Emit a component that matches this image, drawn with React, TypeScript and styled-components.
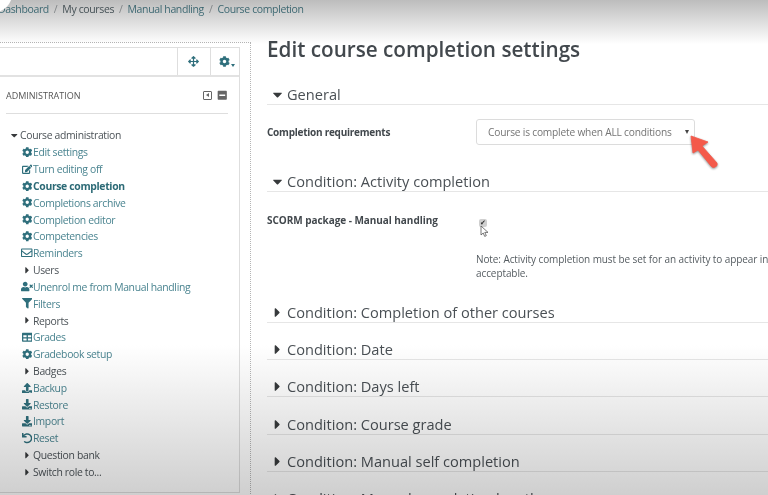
import styled, { createGlobalStyle } from "styled-components";
import {
  FaArrowsAlt,
  FaCaretDown,
  FaCaretRight,
  FaCog,
  FaDownload,
  FaEdit,
  FaFilter,
  FaMinusSquare,
  FaRegEnvelope,
  FaTable,
  FaUndo,
  FaUpload,
  FaUserTimes,
} from "react-icons/fa";
import type { ComponentType } from "react";

const GlobalStyle = createGlobalStyle`
  html, body {
    margin: 0;
    padding: 0;
    background: #fff;
  }
  body {
    font-family: "Open Sans", "Liberation Sans", sans-serif;
    color: #373a3c;
  }
`;

const Screen = styled.div`
  position: relative;
  width: 768px;
  height: 495px;
  overflow: hidden;
  background: #fff;
`;
const Page = styled.div`
  width: 768px;
  height: 495px;
  overflow: hidden;
  filter: blur(0.35px);
`;
const TopShade = styled.div`
  position: absolute;
  top: 0;
  left: 0;
  right: 0;
  height: 44px;
  mix-blend-mode: multiply;
  background: linear-gradient(#bdbdbd, #fff);
`;
const BottomShade = styled.div`
  position: absolute;
  bottom: 0;
  left: 0;
  right: 0;
  height: 150px;
  mix-blend-mode: multiply;
  background: linear-gradient(#fff, #cfcfcf);
`;
const Corner = styled.div`
  position: absolute;
  top: -24px;
  left: -24px;
  width: 36px;
  height: 36px;
  border-radius: 50%;
  background: #fff;
`;
const Breadcrumb = styled.nav`
  height: 17px;
  display: flex;
  align-items: center;
  font-size: 10.5px;
  letter-spacing: -0.37px;
  white-space: nowrap;
  margin-left: -2px;
`;
const Crumb = styled.span<{ $link?: boolean }>`
  color: ${(props) => (props.$link ? "#4f8490" : "#56656b")};
`;
const CrumbSep = styled.span`
  color: #a3a8ab;
  margin: 0 5px;
`;
const Columns = styled.div`
  display: flex;
  margin-top: 25px;
`;
const Sidebar = styled.aside`
  width: 250.5px;
  height: 460px;
  flex-shrink: 0;
  box-sizing: border-box;
  border-top: 1.5px dotted #b5b5b5;
  border-right: 1.5px dotted #b5b5b5;
  padding: 4px 10px 0 0;
`;
const Block = styled.section`
  height: 444px;
  border: 1px solid #dedede;
  border-left: none;
  display: flex;
  flex-direction: column;
`;
const BlockTools = styled.div`
  height: 27px;
  display: flex;
  justify-content: flex-end;
  border-bottom: 2px solid #e2e2e2;
`;
const ToolCell = styled.div<{ $w: number }>`
  width: ${(props) => props.$w}px;
  display: flex;
  align-items: center;
  justify-content: center;
  border-left: 1px solid #dedede;
  color: #2f6f7c;
  font-size: 11px;
  position: relative;
`;
const ToolCaret = styled.span`
  position: absolute;
  right: 4px;
  bottom: 8px;
  width: 0;
  height: 0;
  border-left: 2.5px solid transparent;
  border-right: 2.5px solid transparent;
  border-top: 3px solid #2f6f7c;
`;
const BlockHead = styled.header`
  margin: 0 11px 0 6px;
  height: 36px;
  display: flex;
  align-items: center;
  justify-content: space-between;
  border-bottom: 1px solid #dedede;
`;
const BlockTitle = styled.h2`
  margin: 0;
  font-size: 9px;
  font-weight: 400;
  color: #555;
`;
const HeadIcons = styled.div`
  display: flex;
  align-items: center;
  gap: 5px;
  color: #666;
  font-size: 10.5px;
`;
const DockIcon = styled.span`
  display: block;
  width: 9px;
  height: 9px;
  box-sizing: border-box;
  border: 1px solid #666;
  border-radius: 1px;
  position: relative;
  &::after {
    content: "";
    position: absolute;
    top: 1.5px;
    left: 1.5px;
    border-top: 2px solid transparent;
    border-bottom: 2px solid transparent;
    border-right: 3px solid #666;
  }
`;
const Tree = styled.ul`
  list-style: none;
  margin: 0;
  padding: 13px 0 0 8px;
`;
const Row = styled.li<{ $depth: number }>`
  height: 16.83px;
  display: flex;
  align-items: center;
  padding-left: ${(props) => props.$depth * 13}px;
  font-size: 10.4px;
  letter-spacing: -0.33px;
  white-space: nowrap;
`;
const IconSlot = styled.span<{ $size?: number }>`
  width: 12px;
  display: flex;
  align-items: center;
  justify-content: center;
  flex-shrink: 0;
  color: #2f6f7c;
  font-size: ${(props) => props.$size ?? 10.5}px;
`;
const CaretSlot = styled(IconSlot)`
  color: #373a3c;
  font-size: 10.5px;
`;
const RowLabel = styled.span<{ $link?: boolean; $bold?: boolean }>`
  color: ${(props) => (props.$bold ? "#2c6a76" : props.$link ? "#4a8490" : "#4b5257")};
  font-weight: ${(props) => (props.$bold ? 700 : 400)};
`;
const Main = styled.main`
  flex: 1;
  min-width: 0;
  padding-left: 16.5px;
  margin-top: -8px;
`;
const Title = styled.h1`
  margin: 0;
  height: 32px;
  line-height: 30px;
  font-size: 20.7px;
  font-weight: 600;
  color: #42484d;
  white-space: nowrap;
`;
const Section = styled.div`
  width: 520px;
  margin-top: 3px;
  height: 34.2px;
  box-sizing: border-box;
  display: flex;
  align-items: flex-end;
  padding-left: 5px;
  border-bottom: 1px solid #e6e6e6;
  font-size: 14.6px;
  line-height: 19px;
  color: #4a5055;
  white-space: nowrap;
`;
const FirstSection = styled(Section)`
  margin-top: 5px;
`;
const SectionCaret = styled.span`
  width: 15px;
  display: flex;
  align-items: center;
  height: 19px;
  font-size: 15px;
  color: #373a3c;
  svg {
    margin-left: -2px;
  }
`;
const FormRow = styled.div<{ $h: number; $top: number }>`
  display: flex;
  width: 520px;
  height: ${(props) => props.$h}px;
  box-sizing: border-box;
  padding-top: ${(props) => props.$top}px;
  align-items: flex-start;
`;
const FieldLabel = styled.label<{ $spacing: number; $line: number }>`
  width: 209px;
  flex-shrink: 0;
  font-size: 10px;
  font-weight: 700;
  line-height: ${(props) => props.$line}px;
  letter-spacing: ${(props) => props.$spacing}px;
  color: #42484d;
  white-space: nowrap;
`;
const Select = styled.div`
  width: 219px;
  height: 26px;
  box-sizing: border-box;
  display: flex;
  align-items: center;
  justify-content: space-between;
  padding: 0 5px 0 11px;
  border: 1px solid #dcdcdc;
  border-radius: 3px;
  font-size: 10.2px;
  letter-spacing: -0.2px;
  color: #757575;
  white-space: nowrap;
`;
const SelectCaret = styled.span`
  width: 0;
  height: 0;
  border-left: 2.5px solid transparent;
  border-right: 2.5px solid transparent;
  border-top: 4px solid #444;
`;
const CheckCol = styled.div`
  position: relative;
  flex: 1;
  white-space: nowrap;
`;
const CheckBox = styled.span`
  display: flex;
  align-items: center;
  justify-content: center;
  margin: 5.5px 0 0 3px;
  width: 8px;
  height: 8px;
  border-radius: 2px;
  background: #cfcfcf;
  color: #333;
  font-size: 7px;
  line-height: 8px;
`;
const Note = styled.p`
  margin: 25px 0 0;
  font-size: 10px;
  line-height: 14.5px;
  letter-spacing: -0.09px;
  color: #555c61;
`;
const CursorMark = styled.svg`
  position: absolute;
  left: 4px;
  top: 12px;
`;
const ArrowMark = styled.svg`
  position: absolute;
  left: 686px;
  top: 134px;
  filter: drop-shadow(0.5px 1px 0.8px rgba(0, 0, 0, 0.45));
`;

type Item = {
  label: string;
  depth: number;
  icon?: ComponentType;
  iconSize?: number;
  caret?: "down" | "right";
  link?: boolean;
  bold?: boolean;
};

const items: Item[] = [
  { label: "Course administration", depth: 0, caret: "down" },
  { label: "Edit settings", depth: 1, icon: FaCog, link: true },
  { label: "Turn editing off", depth: 1, icon: FaEdit, link: true },
  { label: "Course completion", depth: 1, icon: FaCog, link: true, bold: true },
  { label: "Completions archive", depth: 1, icon: FaCog, link: true },
  { label: "Completion editor", depth: 1, icon: FaCog, link: true },
  { label: "Competencies", depth: 1, icon: FaCog, link: true },
  { label: "Reminders", depth: 1, icon: FaRegEnvelope, iconSize: 11.5, link: true },
  { label: "Users", depth: 1, caret: "right" },
  { label: "Unenrol me from Manual handling", depth: 1, icon: FaUserTimes, iconSize: 13, link: true },
  { label: "Filters", depth: 1, icon: FaFilter, link: true },
  { label: "Reports", depth: 1, caret: "right" },
  { label: "Grades", depth: 1, icon: FaTable, link: true },
  { label: "Gradebook setup", depth: 1, icon: FaCog, link: true },
  { label: "Badges", depth: 1, caret: "right" },
  { label: "Backup", depth: 1, icon: FaUpload, link: true },
  { label: "Restore", depth: 1, icon: FaDownload, link: true },
  { label: "Import", depth: 1, icon: FaDownload, link: true },
  { label: "Reset", depth: 1, icon: FaUndo, link: true },
  { label: "Question bank", depth: 1, caret: "right" },
  { label: "Switch role to...", depth: 1, caret: "right" },
];

const closedSections = [
  "Condition: Completion of other courses",
  "Condition: Date",
  "Condition: Days left",
  "Condition: Course grade",
  "Condition: Manual self completion",
  "Condition: Manual completion by others",
];

function TreeRow({ item }: { item: Item }) {
  const Icon = item.icon;
  return (
    <Row $depth={item.depth}>
      {Icon && (
        <IconSlot $size={item.iconSize}>
          <Icon />
        </IconSlot>
      )}
      {item.caret && (
        <CaretSlot>{item.caret === "down" ? <FaCaretDown /> : <FaCaretRight />}</CaretSlot>
      )}
      <RowLabel $link={item.link} $bold={item.bold}>
        {item.label}
      </RowLabel>
    </Row>
  );
}

function SectionHead({ label, open }: { label: string; open?: boolean }) {
  return (
    <Section>
      <SectionCaret>{open ? <FaCaretDown /> : <FaCaretRight />}</SectionCaret>
      {label}
    </Section>
  );
}

export default function App() {
  return (
    <Screen>
      <GlobalStyle />
      <Page>
        <Breadcrumb>
          <Crumb $link>Dashboard</Crumb>
          <CrumbSep>/</CrumbSep>
          <Crumb>My courses</Crumb>
          <CrumbSep>/</CrumbSep>
          <Crumb $link>Manual handling</Crumb>
          <CrumbSep>/</CrumbSep>
          <Crumb $link>Course completion</Crumb>
        </Breadcrumb>
        <Columns>
          <Sidebar>
            <Block>
              <BlockTools>
                <ToolCell $w={32}>
                  <FaArrowsAlt />
                </ToolCell>
                <ToolCell $w={28}>
                  <FaCog />
                  <ToolCaret />
                </ToolCell>
              </BlockTools>
              <BlockHead>
                <BlockTitle>ADMINISTRATION</BlockTitle>
                <HeadIcons>
                  <DockIcon />
                  <FaMinusSquare />
                </HeadIcons>
              </BlockHead>
              <Tree>
                {items.map((item) => (
                  <TreeRow key={item.label} item={item} />
                ))}
              </Tree>
            </Block>
          </Sidebar>
          <Main>
            <Title>Edit course completion settings</Title>
            <FirstSection>
              <SectionCaret>
                <FaCaretDown />
              </SectionCaret>
              General
            </FirstSection>
            <FormRow $h={50} $top={14}>
              <FieldLabel $spacing={-0.25} $line={26}>
                Completion requirements
              </FieldLabel>
              <Select>
                Course is complete when ALL conditions
                <SelectCaret />
              </Select>
            </FormRow>
            <SectionHead label="Condition: Activity completion" open />
            <FormRow $h={93.4} $top={21}>
              <FieldLabel $spacing={-0.05} $line={14}>
                SCORM package - Manual handling
              </FieldLabel>
              <CheckCol>
                <CheckBox>✔</CheckBox>
                <CursorMark width="10" height="13" viewBox="0 0 10 13">
                  <path d="M1 1v9l2.2-2 1.5 3.4 1.6-.7-1.5-3.3H8z" fill="#fff" stroke="#555" strokeWidth="0.8" />
                </CursorMark>
                <Note>
                  Note: Activity completion must be set for an activity to appear in
                  <br />
                  acceptable.
                </Note>
              </CheckCol>
            </FormRow>
            {closedSections.map((label) => (
              <SectionHead key={label} label={label} />
            ))}
          </Main>
        </Columns>
      </Page>
      <TopShade />
      <BottomShade />
      <Corner />
      <ArrowMark width="36" height="38" viewBox="0 0 36 38">
        <path
          d="M5 2L22 8L16 12L31 29Q32 32 29 33Q27 34.5 25 32L12 16L7 19Z"
          fill="#f4594a"
          stroke="#f4594a"
          strokeWidth="0.8"
          strokeLinejoin="round"
        />
      </ArrowMark>
    </Screen>
  );
}
